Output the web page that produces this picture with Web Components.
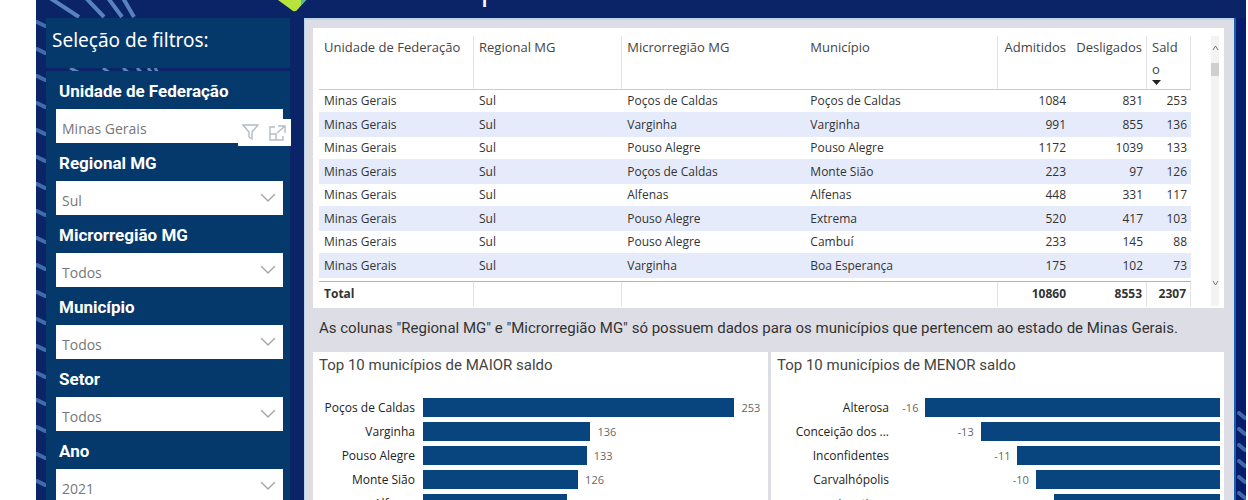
<!DOCTYPE html>
<html lang="pt-BR">
<head>
<meta charset="utf-8">
<title>Painel de saldo por município</title>
<style>
html { overflow: hidden; background: #fff; }
body { margin: 0; font-family: "Open Sans", "Noto Sans", sans-serif; }
</style>
</head>
<body>
<dash-board></dash-board>
<script>
const make = (name, html, init) => {
  const t = document.createElement('template');
  t.innerHTML = html;
  customElements.define(name, class extends HTMLElement {
    connectedCallback() {
      if (this.shadowRoot) return;
      this.attachShadow({ mode: 'open' }).append(t.content.cloneNode(true));
      if (init) init(this, this.shadowRoot);
    }
  });
};

/* Diagonal light streaks running down the edge of the board */
make('edge-streaks', `
<style>
:host { display: block; overflow: hidden; }
svg { display: block; width: 100%; height: 100%; }
path { stroke: #5f93cf; stroke-width: 4; stroke-linecap: round; opacity: .65; }
</style>
<svg aria-hidden="true"></svg>`, (el, root) => {
  const from = +el.getAttribute('from'), to = +el.getAttribute('to');
  const step = +el.getAttribute('step'), steep = el.hasAttribute('steep');
  let s = '';
  for (let y = from; y < to; y += step) s += steep ? `<path d="M3 ${y - 2}L9 ${y + 3}"/>` : `<path d="M1 ${y}L9 ${y + 4}"/>`;
  root.querySelector('svg').innerHTML = s;
});

/* Labelled drop-down of the filter column */
make('filter-field', `
<style>
:host { display: block; }
label { display: block; height: 38px; padding-left: 3px; color: #fff; font: 700 17px/40px Roboto, sans-serif; }
.box { display: grid; position: relative; }
select { grid-area: 1 / 1; width: 100%; height: 34px; box-sizing: border-box; appearance: none; border: 0; border-radius: 0; margin: 0; padding: 4px 30px 0 6px; background: #fff; color: #777; font: 14px "Open Sans", sans-serif; }
.chev { grid-area: 1 / 1; justify-self: end; align-self: center; margin-right: 7px; pointer-events: none; }
</style>
<label for="s"></label>
<div class="box">
  <select id="s"><option></option></select>
  <svg class="chev" width="16" height="10" viewBox="0 0 16 10" fill="none" stroke="#aaa" stroke-width="1.5"><path d="M1 1l7 7 7-7"/></svg>
  <slot></slot>
</div>`, (el, root) => {
  root.querySelector('label').textContent = el.getAttribute('label');
  root.querySelector('option').textContent = el.getAttribute('value');
});

/* Hover toolbar lying over the corner of a filter */
make('visual-tools', `
<style>
:host { position: absolute; right: -8px; bottom: -3px; display: flex; width: 53px; height: 27px; background: #fff; }
button { border: 0; padding: 0; background: none; flex: 1; display: grid; place-items: center; }
</style>
<button aria-label="Filtros"><svg width="18" height="17" viewBox="0 0 18 17" fill="none" stroke="#b3bcc4" stroke-width="1.4"><path d="M1 1h15l-6 7v7l-3-2V8z"/></svg></button>
<button aria-label="Modo de foco"><svg width="17" height="16" viewBox="0 0 17 16" fill="none" stroke="#b3bcc4" stroke-width="1.4"><path d="M6 2H1v13h13v-4M1 9h6v6M9 1h7v7M16 1L8 8"/></svg></button>`);

make('filter-panel', `
<style>
:host { display: block; }
h2 { margin: 0; height: 50px; background: #05386b; color: #fff; font: 400 19px/44px "Noto Sans", sans-serif; padding-left: 6px; }
.sep { display: block; height: 3px; }
.list { background: #05386b; padding: 0 7px 14px 10px; min-height: 440px; }
path { stroke: #6f9fd0; stroke-width: 3; opacity: .8; }
</style>
<h2>Seleção de filtros:</h2>
<svg class="sep" width="130" height="3" aria-hidden="true"><path d="M24 0l10 5M57 0l7 5M77 0l6 5M91 0l5 5M102 0l4 5M109 0l3 5"/></svg>
<div class="list">
  <filter-field label="Unidade de Federação" value="Minas Gerais"><visual-tools></visual-tools></filter-field>
  <filter-field label="Regional MG" value="Sul"></filter-field>
  <filter-field label="Microrregião MG" value="Todos"></filter-field>
  <filter-field label="Município" value="Todos"></filter-field>
  <filter-field label="Setor" value="Todos"></filter-field>
  <filter-field label="Ano" value="2021"></filter-field>
</div>`);

const rows = [
  ['Poços de Caldas', 'Poços de Caldas', 1084, 831, 253],
  ['Varginha', 'Varginha', 991, 855, 136],
  ['Pouso Alegre', 'Pouso Alegre', 1172, 1039, 133],
  ['Poços de Caldas', 'Monte Sião', 223, 97, 126],
  ['Alfenas', 'Alfenas', 448, 331, 117],
  ['Pouso Alegre', 'Extrema', 520, 417, 103],
  ['Pouso Alegre', 'Cambuí', 233, 145, 88],
  ['Varginha', 'Boa Esperança', 175, 102, 73]
];

make('data-table', `
<style>
:host { display: flex; background: #fff; padding: 8px 5px 2px 6px; }
table { flex: 1; min-width: 0; table-layout: fixed; border-collapse: separate; border-spacing: 0; color: #333; font-size: 12px; }
th, td { padding: 0 4px 0 5px; text-align: left; white-space: nowrap; line-height: 20px; }
thead th { box-sizing: border-box; height: 54px; vertical-align: top; font-weight: 400; font-size: 13px; line-height: 22px; border-bottom: 1px solid #ccc; color: #444; }
thead th:nth-child(1), thead th:nth-child(2), thead th:nth-child(4), thead th:nth-child(6), tfoot .l { border-right: 1px solid #e2e2e6; }
thead th:last-child { white-space: normal; word-break: break-all; padding-right: 10px; border-right: 1px solid #e2e2e6; }
thead svg { display: block; }
tbody td { height: 22px; }
tbody tr:nth-child(even) td { height: 25px; background: #e5ebfb; }
.n { text-align: right; }
tfoot td { font-weight: 700; height: 24px; border-top: 1px solid #a9b4c4; }
tfoot tr.gap td { height: 3px; border: 0; line-height: 0; padding: 0; }
.bar { width: 8px; margin: 0 0 0 20px; background: #f3f3f3; display: flex; flex-direction: column; align-items: center; justify-content: space-between; padding: 9px 0 20px; }
.bar i { width: 8px; height: 13px; background: #cfcfcf; margin-top: 12px; }
.up { display: flex; flex-direction: column; align-items: center; }
</style>
<table>
<colgroup><col style="width:155px"><col style="width:17%"><col style="width:21%"><col><col style="width:72px"><col style="width:77px"><col style="width:44px"></colgroup>
<thead><tr><th>Unidade de Federação</th><th>Regional MG</th><th>Microrregião MG</th><th>Município</th><th class="n">Admitidos</th><th class="n">Desligados</th><th>Saldo<svg width="9" height="5"><path d="M0 0h9L4.500 5z" fill="#222"/></svg></th></tr></thead>
<tbody></tbody>
<tfoot><tr class="gap"><td colspan="7"></td></tr><tr><td class="l">Total</td><td class="l"></td><td></td><td class="l"></td><td class="n">10860</td><td class="n l">8553</td><td class="n l">2307</td></tr></tfoot>
</table>
<div class="bar" aria-hidden="true"><div class="up"><svg width="7" height="6" fill="none" stroke="#777"><path d="M1 5l2.500-4L6 5"/></svg><i></i></div><svg width="7" height="6" fill="none" stroke="#777"><path d="M1 1l2.500 4L6 1"/></svg></div>`, (el, root) => {
  root.querySelector('tbody').innerHTML = rows.map(r => `<tr><td>Minas Gerais</td><td>Sul</td><td>${r[0]}</td><td>${r[1]}</td>${r.slice(2).map(v => `<td class="n">${v}</td>`).join('')}</tr>`).join('');
});

/* Horizontal bar chart; with "reverse" the bars grow from the right edge */
make('bar-chart', `
<style>
:host { display: block; background: #fff; padding-bottom: 16px; }
h3 { margin: 0; padding: 0 6px; height: 43px; font: 400 15px/26px Roboto, sans-serif; color: #444; }
.row { display: grid; grid-template-columns: var(--name) 1fr; column-gap: 8px; align-items: center; height: 24px; padding-right: 4px; font-size: 12px; }
.name { text-align: right; color: #222; white-space: nowrap; }
.plot { display: flex; align-items: center; gap: 7px; }
.bar { background: #08457f; height: 19px; }
.val { color: #666; font-size: 11px; }
:host([reverse]) .plot { flex-direction: row-reverse; }
</style>
<h3></h3><div class="rows"></div>`, (el, root) => {
  root.querySelector('h3').textContent = el.getAttribute('heading');
  const unit = +el.getAttribute('unit');
  root.querySelector('.rows').innerHTML = el.getAttribute('data').split(';').map(d => {
    const [n, v] = d.split(':');
    return `<div class="row"><span class="name">${n}</span><span class="plot"><span class="bar" style="width:${Math.abs(v) * unit}%"></span><span class="val">${v}</span></span></div>`;
  }).join('');
});

make('dash-board', `
<style>
:host { display: block; margin: 0 2px 0 36px; background: #0b2468; }
header { display: flex; align-items: flex-start; height: 18px; overflow: hidden; position: relative; }
header h1 { margin: -35px 0 0 345px; color: #fff; font: 400 32px/44px "Open Sans", sans-serif; }
header svg { position: absolute; left: 0; top: 0; }
.body { display: grid; grid-template-columns: 10px 244px minmax(0, 1fr) 12px; }
main { margin-left: 14px; padding: 8px 10px 16px 8px; background: #dddde5; border: 2px solid #b9d3ea; border-width: 2px 0 0 1px; }
p { margin: 0; padding-left: 6px; font: 15px/40px Roboto, sans-serif; height: 44px; color: #333; white-space: nowrap; }
.charts { display: grid; grid-template-columns: 455fr 453fr; gap: 3px; }
.a { --name: 102px; } .b { --name: 118px; }
.right { border-left: 2px solid #1560a8; background: #071c6c; }
</style>
<header>
  <svg width="290" height="18" aria-hidden="true"><g stroke="#6d9bd6" stroke-width="4" opacity=".8"><path d="M14-2L43 17M50-2L68 17M72-2L86 17M87-2L98 17"/></g><path d="M242 0L257 11Q260 12 262 9L270 0z" fill="#b8e23c"/><path d="M265 5l5-5h-5z" fill="#3fc98a"/></svg>
  <h1>Municípios</h1>
</header>
<div class="body">
  <edge-streaks from="4" to="560" step="27"></edge-streaks>
  <filter-panel></filter-panel>
  <main>
    <data-table></data-table>
    <p>As colunas "Regional MG" e "Microrregião MG" só possuem dados para os municípios que pertencem ao estado de Minas Gerais.</p>
    <div class="charts">
      <bar-chart class="a" heading="Top 10 municípios de MAIOR saldo" unit="0.361" data="Poços de Caldas:253;Varginha:136;Pouso Alegre:133;Monte Sião:126;Alfenas:117"></bar-chart>
      <bar-chart class="b" reverse heading="Top 10 municípios de MENOR saldo" unit="5.7" data="Alterosa:-16;Conceição dos ...:-13;Inconfidentes:-11;Carvalhópolis:-10;Jacutinga:-9"></bar-chart>
    </div>
  </main>
  <edge-streaks class="right" from="397" to="560" step="16" steep></edge-streaks>
</div>`);
</script>
</body>
</html>
